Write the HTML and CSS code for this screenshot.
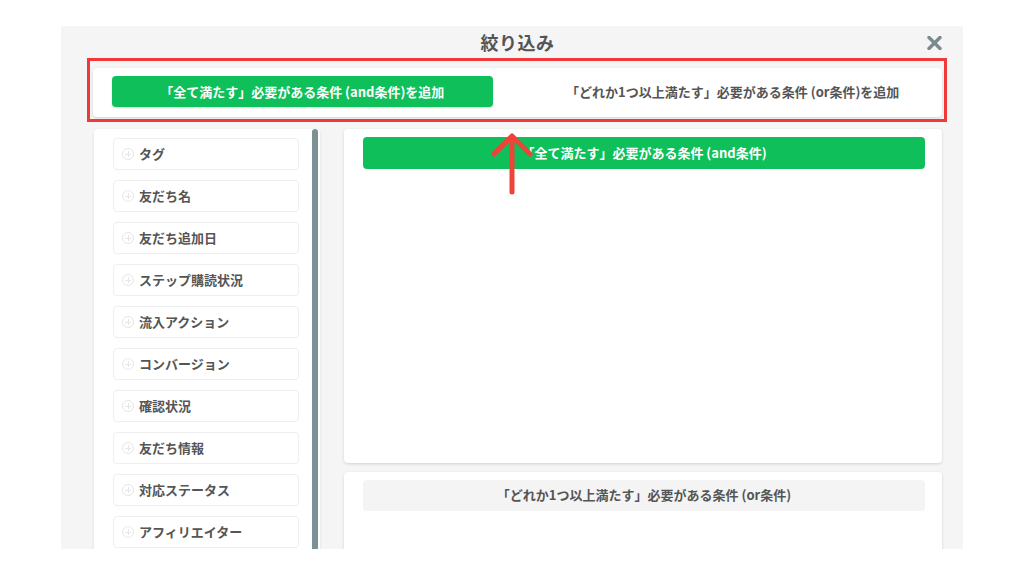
FILE: index.html
```html
<!DOCTYPE html>
<html lang="ja">
<head>
    <meta charset="UTF-8">
    <meta name="viewport" content="width=device-width, initial-scale=1.0">
    <title>絞り込み</title>
    <link rel="stylesheet" href="styles.css">
</head>
<body>
    <div class="modal">
        <div class="modal-header">
            <h2 class="modal-title">絞り込み</h2>
            <button class="close-btn" aria-label="閉じる">
                <svg width="15" height="14" viewBox="0 0 15 14">
                    <path d="M2 1.5 L13 12.5 M13 1.5 L2 12.5" stroke="#7b8a8c" stroke-width="3.4" stroke-linecap="round"/>
                </svg>
            </button>
        </div>

        <div class="add-card">
            <button class="add-btn add-and">「全て満たす」必要がある条件 (and条件)を追加</button>
            <button class="add-btn add-or">「どれか1つ以上満たす」必要がある条件 (or条件)を追加</button>
        </div>

        <div class="modal-body">
            <div class="side-card">
                <ul class="item-list">
                    <li class="item"><span class="plus"></span>タグ</li>
                    <li class="item"><span class="plus"></span>友だち名</li>
                    <li class="item"><span class="plus"></span>友だち追加日</li>
                    <li class="item"><span class="plus"></span>ステップ購読状況</li>
                    <li class="item"><span class="plus"></span>流入アクション</li>
                    <li class="item"><span class="plus"></span>コンバージョン</li>
                    <li class="item"><span class="plus"></span>確認状況</li>
                    <li class="item"><span class="plus"></span>友だち情報</li>
                    <li class="item"><span class="plus"></span>対応ステータス</li>
                    <li class="item"><span class="plus"></span>アフィリエイター</li>
                </ul>
                <div class="scroll-thumb"></div>
            </div>

            <div class="main-col">
                <div class="cond-card cond-and">
                    <div class="cond-head head-and">「全て満たす」必要がある条件 (and条件)</div>
                </div>
                <div class="cond-card cond-or">
                    <div class="cond-head head-or">「どれか1つ以上満たす」必要がある条件 (or条件)</div>
                </div>
            </div>
        </div>
    </div>

    <!-- 注釈（赤枠と矢印） -->
    <div class="note-box"></div>
    <svg class="note-arrow" width="50" height="70" viewBox="0 0 50 70">
        <path d="M25 64 L25 8 M7 26 L25 8 L43 26" fill="none" stroke="#ee4338" stroke-width="5" stroke-linecap="round" stroke-linejoin="round"/>
    </svg>
</body>
</html>
```

FILE: styles.css
```css
* {
    box-sizing: border-box;
}
body {
    margin: 0;
    background: #fff;
    font-family: "Noto Sans CJK JP", "Noto Sans", sans-serif;
    color: #555;
    position: relative;
    height: 576px;
    overflow: hidden;
}
.modal {
    margin: 26px 0 0 61px;
    width: 902px;
    height: 523px;
    background: #f5f5f5;
    padding: 0 21px 0 32px;
    overflow: hidden;
}
.modal-header {
    height: 42px;
    display: flex;
    align-items: center;
    justify-content: center;
    position: relative;
    padding-bottom: 10px;
}
.modal-title {
    margin: 0;
    font-size: 18px;
    font-weight: bold;
    color: #555;
    line-height: 1;
    letter-spacing: 0.5px;
}
.close-btn {
    position: absolute;
    right: 0;
    top: 10px;
    border: none;
    background: none;
    padding: 0;
    width: 15px;
    height: 14px;
}
.add-card {
    background: #fff;
    border-radius: 4px;
    box-shadow: 0 1px 3px rgba(0, 0, 0, 0.14);
    padding: 8px 19px 10px 19px;
    display: flex;
    gap: 50px;
}
.add-btn {
    flex: 1;
    height: 31px;
    border: none;
    border-radius: 4px;
    font-family: inherit;
    font-size: 13px;
    font-weight: bold;
    padding-bottom: 2px;
}
.add-and {
    background: #0fbf5a;
    color: #fff;
    box-shadow: 0 1px 2px rgba(0, 0, 0, 0.15);
}
.add-or {
    background: transparent;
    color: #555;
}
.modal-body {
    display: flex;
    gap: 24px;
    margin-top: 12px;
    padding-left: 1px;
}
.side-card {
    width: 226px;
    background: #fff;
    border-radius: 4px 4px 0 0;
    box-shadow: 0 1px 3px rgba(0, 0, 0, 0.1);
    padding: 0 2px 0 19px;
    display: flex;
    gap: 13px;
    height: 430px;
}
.item-list {
    list-style: none;
    margin: 0;
    padding: 9px 0 0 0;
    width: 186px;
    display: flex;
    flex-direction: column;
    gap: 10px;
}
.item {
    height: 32px;
    flex-shrink: 0;
    border: 1px solid #efefef;
    border-radius: 4px;
    display: flex;
    align-items: center;
    padding: 0 0 2px 8px;
    font-size: 13px;
    font-weight: bold;
    color: #555;
}
.plus {
    width: 12px;
    height: 12px;
    border: 1px solid #e6e6e6;
    border-radius: 50%;
    margin: 2px 5px 0 0;
    position: relative;
}
.plus::before,
.plus::after {
    content: "";
    position: absolute;
    background: #e6e6e6;
}
.plus::before {
    left: 2px;
    right: 2px;
    top: 4.5px;
    height: 1px;
}
.plus::after {
    top: 2px;
    bottom: 2px;
    left: 4.5px;
    width: 1px;
}
.scroll-thumb {
    width: 6px;
    background: #7c9194;
    border-radius: 3px 3px 0 0;
}
.main-col {
    width: 598px;
    display: flex;
    flex-direction: column;
    gap: 9px;
}
.cond-card {
    background: #fff;
    border-radius: 4px;
    box-shadow: 0 1px 3px rgba(0, 0, 0, 0.14);
    padding: 8px 17px 0 19px;
}
.cond-and {
    height: 334px;
}
.cond-or {
    height: 100px;
}
.cond-head {
    height: 32px;
    border-radius: 4px;
    display: flex;
    align-items: center;
    justify-content: center;
    font-size: 13px;
    font-weight: bold;
    padding-bottom: 2px;
}
.head-and {
    background: #0fbf5a;
    color: #fff;
}
.head-or {
    background: #f4f4f4;
    color: #555;
    height: 31px;
}
.note-box {
    position: absolute;
    left: 87px;
    top: 58px;
    width: 860px;
    height: 64px;
    border: 3px solid #f03a3a;
}
.note-arrow {
    position: absolute;
    left: 487px;
    top: 128px;
}
```
